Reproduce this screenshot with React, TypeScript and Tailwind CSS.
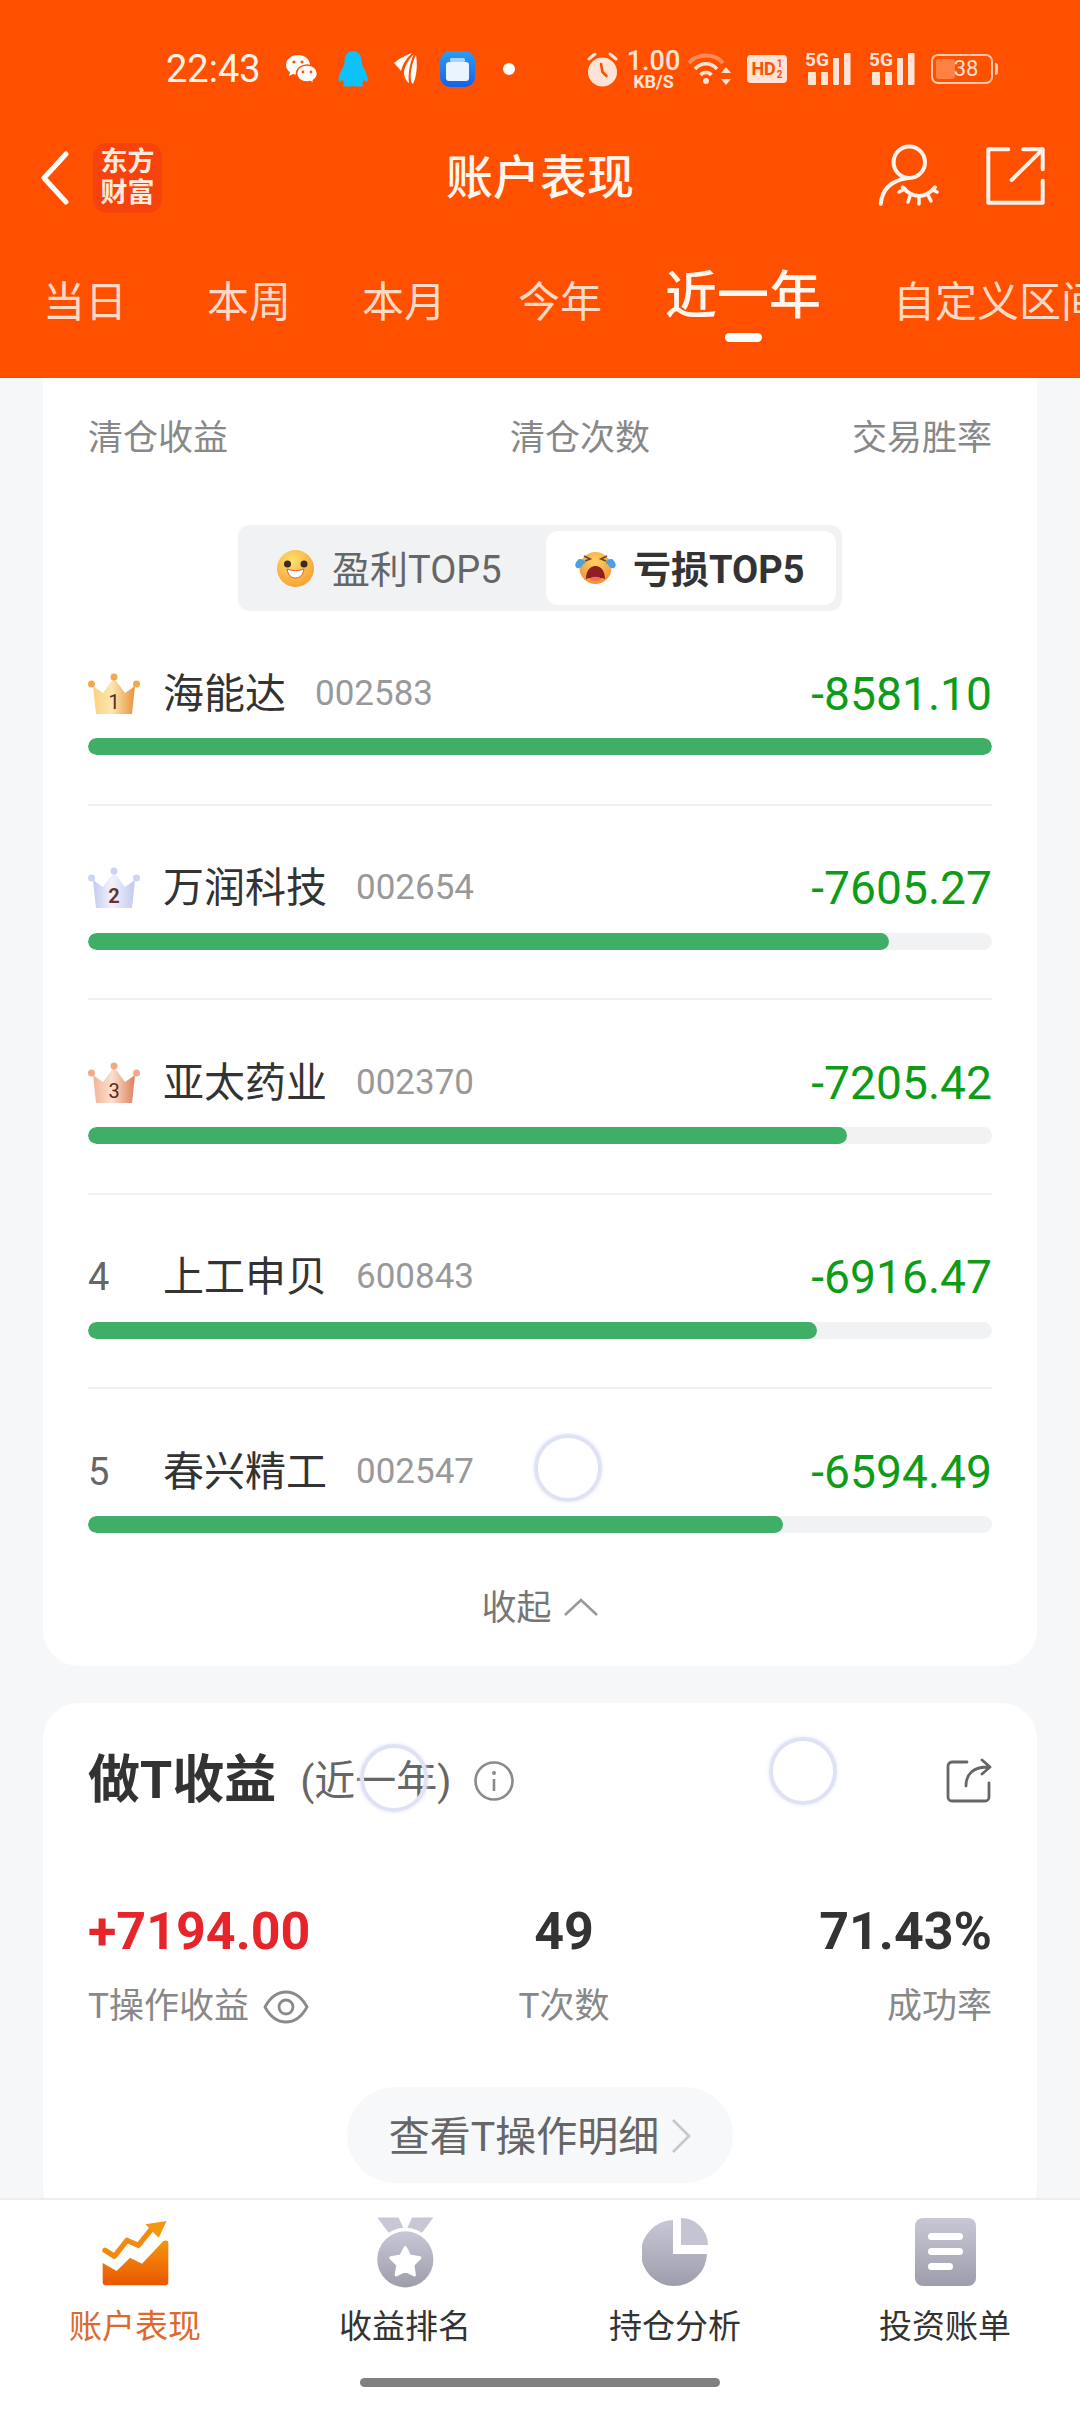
import React from "react";

const FONT = "[font-family:Roboto,'Noto_Sans_CJK_SC',sans-serif]";

function Wechat() {
  return (
    <svg width="33" height="31" viewBox="0 0 33 31" className="ml-[25px]">
      <path d="M13 1C6 1 1 5.500 1 11c0 3 1.500 5.500 4 7.300L4 22l4.200-2.100c1.500.4 3 .6 4.800.6 7 0 12-4.300 12-9.500S20 1 13 1z" fill="#fff" />
      <path d="M22 11c-6 0-10.500 3.800-10.500 8.500S16 28 22 28c1.200 0 2.400-.2 3.500-.5L29 30l-.8-3.600c2.700-1.600 4.300-4 4.300-6.900C32.500 14.800 28 11 22 11z" fill="#fff" stroke="#ff5000" strokeWidth="1.500" />
      <circle cx="9" cy="8" r="1.600" fill="#ff5000" />
      <circle cx="17" cy="8" r="1.600" fill="#ff5000" />
      <circle cx="18" cy="18" r="1.400" fill="#ff5000" />
      <circle cx="26" cy="18" r="1.400" fill="#ff5000" />
    </svg>
  );
}

function QQ() {
  return (
    <svg width="30" height="36" viewBox="0 0 30 36" className="ml-[20px]">
      <path d="M15 0C8.500 0 6.500 5 6.500 11c0 3-1.500 5-3.500 9-2 4.500-3.300 9-2 10.500 1 .8 2.500-.6 3.300-2 .5 2 1.500 3.200 2.700 4.300C5 33.300 4 34 5 35c2 .8 7 .8 10 0 3 .8 8 .8 10 0 1-1 0-1.700-1.700-2.200 1.200-1.100 2.200-2.300 2.700-4.300.8 1.400 2.300 2.800 3.300 2 1.300-1.500 0-6-2-10.500-2-4-3.500-6-3.500-9C23.500 5 21.500 0 15 0z" fill="#0cc2f8" />
    </svg>
  );
}

function Wing() {
  return (
    <svg width="26" height="34" viewBox="0 0 26 34" className="ml-[24px]" fill="#fff">
      <path d="M2 11C8 6 14 3 20 1 15 6 11 11 9 19 7 16 4 13 2 11z" />
      <path d="M22 2C16 8 13 14 12 20c0 5 2 9 5 11-1-7 0-19 5-29z" />
      <path d="M24 3c-4 8-6 18-5 25 0 2 1 3 2 4 3-6 5-17 3-29z" />
    </svg>
  );
}

function BlueApp() {
  return (
    <svg width="35" height="36" viewBox="0 0 35 36" className="ml-[22px]">
      <defs>
        <linearGradient id="ba" x1="0" y1="0" x2="0" y2="1">
          <stop offset="0" stopColor="#2c9cf5" />
          <stop offset="1" stopColor="#1262e6" />
        </linearGradient>
      </defs>
      <rect width="35" height="36" rx="10" fill="url(#ba)" />
      <rect x="10" y="7" width="15" height="4" rx="1.500" fill="#a9d4fb" />
      <rect x="6" y="11" width="23" height="19" rx="3" fill="#eaf4fe" />
    </svg>
  );
}

function Alarm() {
  return (
    <svg width="31" height="35" viewBox="0 0 31 35" className="ml-[72px]">
      <circle cx="15.500" cy="20" r="14.500" fill="#ffe3d6" />
      <path d="M2 7l6-5M29 7l-6-5" stroke="#ffe3d6" strokeWidth="3" strokeLinecap="round" />
      <path d="M14 12l1.500 8 4 4" stroke="#ff5000" strokeWidth="2.600" fill="none" strokeLinecap="round" />
    </svg>
  );
}

function Wifi() {
  return (
    <svg width="44" height="34" viewBox="0 0 44 34" className="ml-[11px]">
      <path d="M1 11C9 1 27 1 35 11" stroke="#ff8a55" strokeWidth="4" fill="none" />
      <path d="M7 17C13 10 23 10 29 17" stroke="#ffe3d6" strokeWidth="3.500" fill="none" />
      <path d="M12.500 23c3-3.500 8-3.500 11 0" stroke="#ffe3d6" strokeWidth="3.500" fill="none" />
      <circle cx="18" cy="29" r="3" fill="#ffe3d6" />
      <path d="M38 15l5 6H33zM38 33l-5-6h10z" fill="#ffe3d6" />
    </svg>
  );
}

function Signal() {
  return (
    <div className="relative ml-[18px] h-[34px] w-[46px] shrink-0">
      <svg width="46" height="34" viewBox="0 0 46 34" className="absolute top-0 left-0">
        <rect x="3" y="20" width="8" height="13" rx="1" fill="#ffe3d6" />
        <rect x="16" y="20" width="7" height="13" rx="1" fill="#ffe3d6" />
        <rect x="28" y="6" width="6" height="27" rx="1" fill="#ffe3d6" />
        <rect x="39" y="1" width="6.500" height="32" rx="1" fill="#ffe3d6" />
      </svg>
      <span className="absolute top-[-3px] left-0 text-[19px] leading-[21px] font-bold text-[#ffe3d6]">5G</span>
    </div>
  );
}

function StatusBar() {
  return (
    <div className={`box-content flex h-[48px] items-center pt-[45px] pl-[166px] ${FONT}`}>
      <span className="w-[94px] shrink-0 text-[38px] leading-[48px] text-[#fff3ec]">22:43</span>
      <Wechat />
      <QQ />
      <Wing />
      <BlueApp />
      <div className="ml-[28px] h-[12px] w-[12px] shrink-0 rounded-full bg-white" />
      <Alarm />
      <div className="ml-[12px] flex w-[47px] shrink-0 flex-col items-center text-[#ffe3d6]">
        <span className="text-[27px] leading-[24px] font-medium">1.00</span>
        <span className="text-[18px] leading-[17px] font-bold">KB/S</span>
      </div>
      <Wifi />
      <div className="ml-[15px] flex h-[28px] w-[40px] shrink-0 items-center justify-center gap-[1px] rounded-[4px] bg-[#ffe3d6] font-bold text-[#ff5000]">
        <span className="text-[18px] leading-none">HD</span>
        <span className="flex flex-col text-[10px] leading-[11px]">
          <span>1</span>
          <span>2</span>
        </span>
      </div>
      <Signal />
      <Signal />
      <div className="ml-[16px] flex shrink-0 items-center">
        <div className="relative flex h-[30px] w-[62px] items-center justify-center rounded-[7px] border-2 border-[#ffc9ae] p-[2px]">
          <div className="absolute top-[3px] bottom-[3px] left-[3px] w-[19px] rounded-[3px] bg-[#ff8040]" />
          <span className="relative ml-[8px] text-[22px] leading-none text-[#ffe3d6]">38</span>
        </div>
        <div className="ml-[2px] h-[12px] w-[3px] rounded-r-sm bg-[#ffc9ae]" />
      </div>
    </div>
  );
}

function NavBar() {
  return (
    <div className={`mt-[37px] grid h-[96px] grid-cols-[1fr_auto_1fr] items-center ${FONT}`}>
      <div className="flex items-center pl-[40px]">
        <svg width="30" height="54" viewBox="0 0 30 54">
          <path d="M26 3L4 27l22 24" stroke="#fff" strokeWidth="5" fill="none" strokeLinecap="round" strokeLinejoin="round" />
        </svg>
        <div className="ml-[23px] flex h-[70px] w-[69px] flex-col items-center justify-center rounded-[14px] bg-[#f6420c] text-[27px] leading-[31px] font-bold text-[#ffeadc]">
          <span>东方</span>
          <span>财富</span>
        </div>
      </div>
      <div className="text-[47px] leading-[60px] font-medium text-[#fff6f0]">账户表现</div>
      <div className="-mt-[4px] flex items-center justify-end gap-[38px] pr-[35px]">
        <svg width="72" height="70" viewBox="0 0 72 70" fill="none" stroke="#fff3ec" strokeWidth="4" strokeLinecap="round">
          <circle cx="34.300" cy="21.300" r="15.700" />
          <path d="M5.700 63C7 50 14 40 32 37.300" />
          <path d="M27.700 46.300C38 58 50 58 60 46.300" />
          <path d="M24 51l6-3M35 55l-2 6M44 57l0 6M53 54l3 6M62 51l-4-2" strokeWidth="3.500" />
        </svg>
        <svg width="60" height="62" viewBox="0 0 60 62" fill="none" stroke="#fff3ec" strokeWidth="4" strokeLinecap="round" strokeLinejoin="round">
          <path d="M23.300 4.300H3.300V57.700H57.700V35.700" />
          <path d="M26.700 35L57.700 4.300M38.300 4.300H57.700V24.300" />
        </svg>
      </div>
    </div>
  );
}

const tabs = [
  { t: "当日", c: "ml-[43px]" },
  { t: "本周", c: "ml-[80px]" },
  { t: "本月", c: "ml-[71px]" },
  { t: "今年", c: "ml-[72px]" },
];

function Tabs() {
  return (
    <div className={`mt-[42px] flex h-[76px] items-start overflow-hidden whitespace-nowrap ${FONT}`}>
      {tabs.map((x) => (
        <span key={x.t} className={`${x.c} mt-[10px] shrink-0 text-[42px] leading-[50px] text-[#ffd9c6]`}>
          {x.t}
        </span>
      ))}
      <div className="relative ml-[63px] flex h-[76px] w-[156px] shrink-0 flex-col items-center">
        <span className="mt-[2px] text-[52px] leading-[54px] font-medium text-[#fff6f0]">近一年</span>
        <div className="absolute top-[65px] h-[9px] w-[37px] rounded-full bg-white" />
      </div>
      <span className="mt-[10px] ml-[72px] shrink-0 text-[42px] leading-[50px] text-[#ffd9c6]">自定义区间</span>
    </div>
  );
}

function Crown({ rank }: { rank: number }) {
  const colors: Record<number, [string, string, string, string]> = {
    1: ["#f9d37e", "#fbe6b0", "#e9923c", "#f2a94b"],
    2: ["#c3cbf0", "#f2f3fc", "#c2c9ee", "#cdd3f3"],
    3: ["#f2b496", "#fbe0d2", "#de7f57", "#f0a98a"],
  };
  const [a, b, c, d] = colors[rank];
  const id = `crown${rank}`;
  return (
    <svg width="52" height="42" viewBox="0 0 52 42">
      <defs>
        <linearGradient id={id} x1="0" y1="0" x2="1" y2="0">
          <stop offset="0" stopColor={a} />
          <stop offset="0.45" stopColor={b} />
          <stop offset="1" stopColor={c} />
        </linearGradient>
      </defs>
      <path d="M5 13L15 20 26 5 37 20 47 13 44 41H8z" fill={`url(#${id})`} />
      <circle cx="3.500" cy="11" r="3.500" fill={d} />
      <circle cx="26" cy="4" r="3.500" fill={d} />
      <circle cx="48.500" cy="11" r="3.500" fill={d} />
      <text x="26" y="36" textAnchor="middle" fontSize="20" fontWeight={rank === 2 ? 700 : 400} fontFamily="Roboto, sans-serif" fill={rank === 2 ? "#6b3526" : "#5a2a16"}>
        {rank}
      </text>
    </svg>
  );
}

function Smile() {
  return (
    <svg width="37" height="37" viewBox="0 0 37 37">
      <defs>
        <radialGradient id="sm" cx="0.4" cy="0.3" r="0.8">
          <stop offset="0" stopColor="#ffe06e" />
          <stop offset="1" stopColor="#f59a2c" />
        </radialGradient>
      </defs>
      <circle cx="18.500" cy="18.500" r="18.500" fill="url(#sm)" />
      <circle cx="10.500" cy="14" r="3.500" fill="#3a2a22" />
      <circle cx="27" cy="14" r="3.500" fill="#3a2a22" />
      <path d="M10 19c5 2 12 2 17 0-1 6-4 9-8.500 9S11 25 10 19z" fill="#fff" stroke="#e4574a" strokeWidth="1" />
    </svg>
  );
}

function Cry() {
  return (
    <svg width="43" height="34" viewBox="0 0 43 34">
      <defs>
        <radialGradient id="cr" cx="0.5" cy="0.3" r="0.8">
          <stop offset="0" stopColor="#ffd166" />
          <stop offset="1" stopColor="#f08a2c" />
        </radialGradient>
      </defs>
      <circle cx="21.500" cy="17" r="16" fill="url(#cr)" />
      <path d="M10 5l6 3-5 2M33 5l-6 3 5 2" stroke="#6b4a2a" strokeWidth="1.800" fill="none" />
      <path d="M12 28c0-8 4-13 9.500-13S31 20 31 28c-6-2-13-2-19 0z" fill="#8f1f22" />
      <path d="M15 28c4-3 9-3 13 0-4 3-9 3-13 0z" fill="#f0705a" />
      <path d="M5 8C1 11 0 15 3 17c3 1 6-2 6-4 4 1 2-6-4-5z" fill="#4c9fe2" />
      <path d="M38 8c4 3 5 7 2 9-3 1-6-2-6-4-4 1-2-6 4-5z" fill="#4c9fe2" />
    </svg>
  );
}

function Toggle() {
  return (
    <div className={`mx-auto mt-[62px] flex h-[86px] w-[604px] items-center rounded-[12px] bg-[#f1f2f4] ${FONT}`}>
      <div className="flex w-[308px] items-center pl-[39px]">
        <Smile />
        <span className="mt-[3px] ml-[18px] text-[38px] leading-[48px] text-[#666666]">盈利TOP5</span>
      </div>
      <div className="flex h-[74px] w-[290px] items-center rounded-[12px] bg-white pl-[28px]">
        <Cry />
        <span className="mt-[3px] ml-[16px] text-[38px] leading-[48px] font-bold text-[#333333]">亏损TOP5</span>
      </div>
    </div>
  );
}

const stocks = [
  { rank: 1, name: "海能达", code: "002583", val: 8581.1 },
  { rank: 2, name: "万润科技", code: "002654", val: 7605.27 },
  { rank: 3, name: "亚太药业", code: "002370", val: 7205.42 },
  { rank: 4, name: "上工申贝", code: "600843", val: 6916.47 },
  { rank: 5, name: "春兴精工", code: "002547", val: 6594.49 },
];

function Row({ s, last }: { s: (typeof stocks)[number]; last: boolean }) {
  return (
    <div className={`h-[194.5px] pt-[57.5px] ${last ? "" : "border-b-2 border-[#f1f1f3]"}`}>
      <div className="flex h-[50px] items-center">
        <div className="flex w-[75px] shrink-0 items-center">
          {s.rank <= 3 ? <Crown rank={s.rank} /> : <span className="text-[38px] leading-[50px] text-[#666666]">{s.rank}</span>}
        </div>
        <span className="text-[41px] leading-[50px] text-[#333333]">{s.name}</span>
        <span className="ml-[29px] text-[35px] leading-[50px] text-[#999999]">{s.code}</span>
        <span className="ml-auto text-[46.200px] leading-[50px] text-[#0d9c16]">-{s.val.toFixed(2)}</span>
      </div>
      <div className="mt-[19.5px] h-[17px] overflow-hidden rounded-full bg-[#f1f2f4]">
        <div className="h-full rounded-full bg-[#3fae66]" style={{ width: `${(s.val / 8581.1) * 100}%` }} />
      </div>
    </div>
  );
}

function RankCard() {
  return (
    <div className={`rounded-b-[36px] bg-white px-[45px] pt-[37px] pb-[33px] ${FONT}`}>
      <div className="flex h-[48px] items-center justify-between text-[35px] leading-[48px] text-[#888888]">
        <span>清仓收益</span>
        <span className="ml-[80px]">清仓次数</span>
        <span>交易胜率</span>
      </div>
      <Toggle />
      {stocks.map((s, i) => (
        <Row key={s.code} s={s} last={i === stocks.length - 1} />
      ))}
      <div className="mt-[1px] flex h-[48px] items-center justify-center text-[35px] leading-[48px] text-[#777777]">
        <span>收起</span>
        <svg width="36" height="19" viewBox="0 0 36 19" className="-mt-[3px] ml-[11px]">
          <path d="M2 17L18 2l16 15" stroke="#999999" strokeWidth="2.600" fill="none" />
        </svg>
      </div>
    </div>
  );
}

function TCard() {
  return (
    <div className={`mt-[37px] rounded-[36px] bg-white px-[45px] pt-[48px] pb-[40px] ${FONT}`}>
      <div className="flex h-[60px] items-center">
        <span className="text-[52px] leading-[60px] font-bold text-[#333333]">做T收益</span>
        <span className="ml-[24px] text-[41px] leading-[60px] text-[#666666]">(近一年)</span>
        <svg width="40" height="40" viewBox="0 0 40 40" className="ml-[22px]">
          <circle cx="20" cy="20" r="18.500" stroke="#8a8a8a" strokeWidth="2.600" fill="none" />
          <circle cx="20" cy="12" r="2" fill="#8a8a8a" />
          <path d="M20 18v12" stroke="#8a8a8a" strokeWidth="2.600" />
        </svg>
        <svg width="46" height="46" viewBox="0 0 46 46" fill="none" stroke="#666666" strokeWidth="2.800" strokeLinecap="round" strokeLinejoin="round" className="-mt-[2px] ml-auto">
          <path d="M21 5H6a4 4 0 0 0-4 4v31a4 4 0 0 0 4 4h33a4 4 0 0 0 4-4V26" />
          <path d="M20 29c0-12 7-19 22-19M36 3l8 7-8 7" />
        </svg>
      </div>
      <div className="mt-[91px] grid grid-cols-[376px_200px_328px]">
        <div>
          <div className="text-[52px] leading-[60px] font-bold text-[#e5252a]">+7194.00</div>
          <div className="mt-[21px] flex h-[48px] items-center text-[35px] leading-[48px] text-[#888888]">
            <span>T操作收益</span>
            <svg width="46" height="34" viewBox="0 0 46 34" className="ml-[14px]" fill="none" stroke="#8a8a8a" strokeWidth="2.800">
              <path d="M2 17C8 6 15 2 23 2s15 4 21 15c-6 11-13 15-21 15S8 28 2 17z" />
              <circle cx="23" cy="17" r="7" />
            </svg>
          </div>
        </div>
        <div className="text-center">
          <div className="text-[52px] leading-[60px] font-bold text-[#333333]">49</div>
          <div className="mt-[21px] h-[48px] text-[35px] leading-[48px] text-[#888888]">T次数</div>
        </div>
        <div className="text-right">
          <div className="text-[52px] leading-[60px] font-bold text-[#333333]">71.43%</div>
          <div className="mt-[21px] h-[48px] text-[35px] leading-[48px] text-[#888888]">成功率</div>
        </div>
      </div>
      <div className="mx-auto mt-[56px] flex h-[96px] w-[386px] items-center justify-center rounded-full bg-[#f7f8fa] text-[41px] leading-[50px] text-[#666666]">
        <span className="mt-[5px]">查看T操作明细</span>
        <svg width="20" height="36" viewBox="0 0 20 36" className="mt-[2px] ml-[12px]">
          <path d="M2 2l16 16L2 34" stroke="#c8c8c8" strokeWidth="2.600" fill="none" />
        </svg>
      </div>
    </div>
  );
}

function IconPerf() {
  return (
    <svg width="70" height="70" viewBox="60 50 210 210">
      <defs>
        <linearGradient id="perf" x1="0" y1="0" x2="0" y2="1">
          <stop offset="0" stopColor="#f5960f" />
          <stop offset="1" stopColor="#ea5600" />
        </linearGradient>
      </defs>
      <path d="M75 150l28 18 38-48 34 15 42-52" stroke="#f28a0e" strokeWidth="16" strokeLinecap="round" strokeLinejoin="round" fill="none" />
      <path d="M196 72l64-10-24 50z" fill="#f5960f" />
      <path d="M68 188l42 24 40-40 36 18 64-68q15-6 15 8v115q0 10-10 10H78q-10 0-10-10z" fill="url(#perf)" />
    </svg>
  );
}

const grayDefs = (id: string) => (
  <defs>
    <linearGradient id={id} x1="0" y1="0" x2="0" y2="1">
      <stop offset="0" stopColor="#c8c7d6" />
      <stop offset="1" stopColor="#9e9dab" />
    </linearGradient>
  </defs>
);

function IconMedal() {
  return (
    <svg width="60" height="72" viewBox="885 48 186 222">
      {grayDefs("med")}
      <path d="M892 52h66l22 48-40 16z" fill="#c8c7d6" />
      <path d="M1066 52h-66l-22 48 40 16z" fill="#c8c7d6" />
      <circle cx="979" cy="182" r="98" fill="#fff" />
      <circle cx="979" cy="182" r="87" fill="url(#med)" />
      <path d="M979 146l14 26 31 5-22 22 5 31-28-14-28 14 5-31-22-22 31-5z" fill="#fff" stroke="#fff" strokeWidth="10" strokeLinejoin="round" />
    </svg>
  );
}

function IconPie() {
  return (
    <svg width="66" height="68" viewBox="0 0 66 68">
      {grayDefs("pie")}
      <path d="M31 2A33 33 0 1 0 65 36H31z" fill="url(#pie)" />
      <path d="M39 0A27 27 0 0 1 66 27H39z" fill="#c5c4d3" />
    </svg>
  );
}

function IconBill() {
  return (
    <svg width="61" height="68" viewBox="0 0 61 68">
      {grayDefs("bill")}
      <rect width="61" height="68" rx="8" fill="url(#bill)" />
      <rect x="13" y="15" width="35" height="7" rx="3.500" fill="#fff" />
      <rect x="13" y="30" width="35" height="7" rx="3.500" fill="#fff" />
      <rect x="13" y="45" width="25" height="7" rx="3.500" fill="#fff" />
    </svg>
  );
}

function BottomNav() {
  const items = [
    { t: "账户表现", i: <IconPerf />, active: true },
    { t: "收益排名", i: <IconMedal />, active: false },
    { t: "持仓分析", i: <IconPie />, active: false },
    { t: "投资账单", i: <IconBill />, active: false },
  ];
  return (
    <div className={`relative z-10 h-[214px] shrink-0 border-t-2 border-[#eeeeee] bg-white ${FONT}`}>
      <div className="grid grid-cols-[270px_270px_270px_270px] pt-[16px]">
        {items.map((x) => (
          <div key={x.t} className="flex flex-col items-center">
            <div className="flex h-[72px] items-center justify-center">{x.i}</div>
            <span className={`mt-[17px] text-[33px] leading-[44px] ${x.active ? "text-[#dd6a2c]" : "text-[#333333]"}`}>{x.t}</span>
          </div>
        ))}
      </div>
      <div className="mx-auto mt-[29px] h-[9px] w-[360px] rounded-full bg-[#808080]" />
    </div>
  );
}

function Touch({ c }: { c: string }) {
  return <div className={`absolute z-20 h-[68px] w-[68px] rounded-full border-[4px] border-[#dee2f4] shadow-[0_0_4px_#e3e6f6] ${c}`} />;
}

export default function App() {
  return (
    <div className="relative flex h-[2412px] w-[1080px] flex-col overflow-hidden bg-[#f6f7f9]">
      <div className="h-[378px] shrink-0 overflow-hidden bg-[#ff5000]">
        <StatusBar />
        <NavBar />
        <Tabs />
      </div>
      <div className="min-h-0 flex-1 overflow-hidden px-[43px]">
        <RankCard />
        <TCard />
      </div>
      <BottomNav />
      <Touch c="left-[534px] top-[1434px]" />
      <Touch c="left-[360px] top-[1744px]" />
      <Touch c="left-[769px] top-[1737px]" />
    </div>
  );
}
